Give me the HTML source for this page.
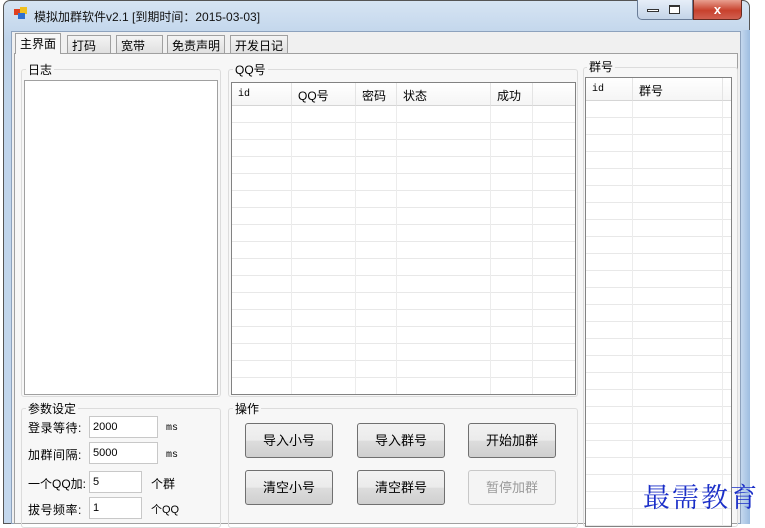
<!DOCTYPE html><html><head><meta charset="utf-8"><style>
*{box-sizing:border-box;margin:0;padding:0}
body{width:765px;height:524px;overflow:hidden;background:#fff;font-family:"Liberation Sans","Noto Sans CJK SC",sans-serif;font-size:12px;color:#000;position:relative}
.a{position:absolute}
.win{left:3px;top:0;width:747px;height:524px;background:linear-gradient(#d6e4f3,#bed3ea 40px,#c4d8ee);border:1px solid #555;border-radius:7px 7px 0 0}
.client{left:11px;top:31px;width:730px;height:493px;background:#f0f0f0;border:1px solid #8da2bd}
.tab{top:35px;height:19px;border:1px solid #a0a0a0;background:linear-gradient(#f4f4f4,#e0e0e0);padding:1px 4px;font-size:12px}
.page{left:14px;top:53px;width:724px;height:471px;background:#f7f7f7;border:1px solid #a0a0a0}
.gb{border:1px solid #dcdcdc;border-radius:3px}
.lbl{background:#f7f7f7;padding:0 2px;font-size:12px}
.grid{background:#fff;border:1px solid #828282;overflow:hidden}
.hd{position:absolute;top:0;height:23px;border-right:1px solid #e4e4e4;background:linear-gradient(#fff,#f5f5f5);border-bottom:1px solid #d5d5d5;padding:4px 0 0 6px}
.inp{background:#fff;border:1px solid #c8c8c8;height:22px;padding:4px 3px 0;font-size:11px}
.btn{width:88px;height:35px;border:1px solid #707070;border-radius:3px;background:linear-gradient(#f2f2f2,#ebebeb 50%,#dddddd 51%,#cfcfcf);text-align:center;line-height:33px;font-size:13px}
.mono{font-family:"Liberation Mono",monospace;font-size:10px}
.f{font-size:12px;letter-spacing:0.5px}
</style></head><body>
<div class="a win"></div>
<div class="a" style="left:14px;top:9px;width:6px;height:6px;background:#e04020"></div>
<div class="a" style="left:20px;top:7px;width:7px;height:7px;background:#f0c020"></div>
<div class="a" style="left:18px;top:13px;width:7px;height:6px;background:#3070d0"></div>
<div class="a" style="left:34px;top:8px;font-size:12px;color:#111">模拟加群软件v2.1 [到期时间：2015-03-03]</div>
<div class="a" style="left:637px;top:0;width:56px;height:20px;border:1px solid #6a7d98;border-top:none;border-radius:0 0 0 5px;background:linear-gradient(#e6eef8,#c4d4e8)"></div>
<div class="a" style="left:647px;top:9px;width:12px;height:3px;border:1px solid #333;background:#fff"></div>
<div class="a" style="left:669px;top:5px;width:11px;height:9px;border:1px solid #333;border-top-width:2px;background:#fff"></div>
<div class="a" style="left:693px;top:0;width:49px;height:20px;border:1px solid #6a2a20;border-top:none;border-radius:0 0 5px 0;background:linear-gradient(#e8a090,#c8412d 55%,#d06050);color:#fff;font-weight:bold;text-align:center;line-height:19px;font-size:13px">x</div>
<div class="a client"></div>
<div class="a page"></div>
<div class="a tab" style="left:15px;top:33px;height:21px;background:#f7f7f7;border-bottom:none;z-index:2">主界面</div>
<div class="a tab" style="left:67px">打码&nbsp;&nbsp;&nbsp;</div>
<div class="a tab" style="left:116px">宽带&nbsp;&nbsp;&nbsp;&nbsp;</div>
<div class="a tab" style="left:167px">免责声明</div>
<div class="a tab" style="left:230px">开发日记</div>

<div class="a gb" style="left:21px;top:69px;width:200px;height:328px"></div>
<div class="a lbl" style="left:26px;top:61px">日志</div>
<div class="a" style="left:24px;top:80px;width:194px;height:315px;background:#fff;border:1px solid #a0a0a0"></div>

<div class="a gb" style="left:228px;top:69px;width:350px;height:328px"></div>
<div class="a lbl" style="left:233px;top:61px">QQ号</div>
<div class="a grid" style="left:231px;top:82px;width:345px;height:313px;background:#fff repeating-linear-gradient(#fff 0 16px,#e8e8e8 16px 17px) 0 23px/100% 100% no-repeat">
<div style="position:absolute;left:0;top:0;width:100%;height:100%;background:linear-gradient(90deg,transparent 59px,#ececec 59px 60px,transparent 60px 123px,#ececec 123px 124px,transparent 124px 164px,#ececec 164px 165px,transparent 165px 258px,#ececec 258px 259px,transparent 259px 300px,#ececec 300px 301px,transparent 301px)"></div>
<div class="hd mono" style="left:0;width:60px;padding-top:6px">id</div>
<div class="hd" style="left:60px;width:64px">QQ号</div>
<div class="hd" style="left:124px;width:41px">密码</div>
<div class="hd" style="left:165px;width:94px">状态</div>
<div class="hd" style="left:259px;width:42px">成功</div>
<div class="hd" style="left:301px;width:44px"></div>
</div>

<div class="a gb" style="left:583px;top:67px;width:155px;height:460px"></div>
<div class="a lbl" style="left:587px;top:58px">群号</div>
<div class="a grid" style="left:585px;top:77px;width:147px;height:450px;background:#fff repeating-linear-gradient(#fff 0 16px,#e8e8e8 16px 17px) 0 23px/100% 100% no-repeat">
<div style="position:absolute;left:0;top:0;width:100%;height:100%;background:linear-gradient(90deg,transparent 46px,#ececec 46px 47px,transparent 47px 136px,#ececec 136px 137px,transparent 137px)"></div>
<div class="hd mono" style="left:0;width:47px;padding-top:6px">id</div>
<div class="hd" style="left:47px;width:90px">群号</div>
<div class="hd" style="left:137px;width:10px"></div>
</div>

<div class="a gb" style="left:21px;top:408px;width:200px;height:120px"></div>
<div class="a lbl" style="left:26px;top:400px">参数设定</div>
<div class="a f" style="left:28px;top:419px">登录等待:</div>
<div class="a inp" style="left:89px;top:416px;width:69px">2000</div>
<div class="a mono" style="left:166px;top:423px">ms</div>
<div class="a f" style="left:28px;top:446px">加群间隔:</div>
<div class="a inp" style="left:89px;top:442px;width:69px">5000</div>
<div class="a mono" style="left:166px;top:450px">ms</div>
<div class="a" style="left:28px;top:475px;font-size:12px">一个QQ加:</div>
<div class="a inp" style="left:89px;top:471px;width:53px">5</div>
<div class="a" style="left:151px;top:475px;font-size:12px">个群</div>
<div class="a f" style="left:28px;top:501px">拔号频率:</div>
<div class="a inp" style="left:89px;top:497px;width:53px">1</div>
<div class="a" style="left:151px;top:501px;font-size:11px">个QQ</div>

<div class="a gb" style="left:228px;top:408px;width:350px;height:120px"></div>
<div class="a lbl" style="left:233px;top:400px">操作</div>
<div class="a btn" style="left:245px;top:423px">导入小号</div>
<div class="a btn" style="left:357px;top:423px">导入群号</div>
<div class="a btn" style="left:468px;top:423px">开始加群</div>
<div class="a btn" style="left:245px;top:470px">清空小号</div>
<div class="a btn" style="left:357px;top:470px">清空群号</div>
<div class="a btn" style="left:468px;top:470px;border-color:#c8c8c8;background:#f4f4f4;color:#9a9a9a">暂停加群</div>

<div class="a" style="left:741px;top:30px;width:9px;height:494px;background:linear-gradient(90deg,#c4d8ee,#9ebde0)"></div>
<div class="a" style="left:643px;top:476px;font-family:'Noto Serif CJK SC',serif;font-size:27px;color:#1a2ec8;letter-spacing:2px">最需教育</div>
</body></html>
